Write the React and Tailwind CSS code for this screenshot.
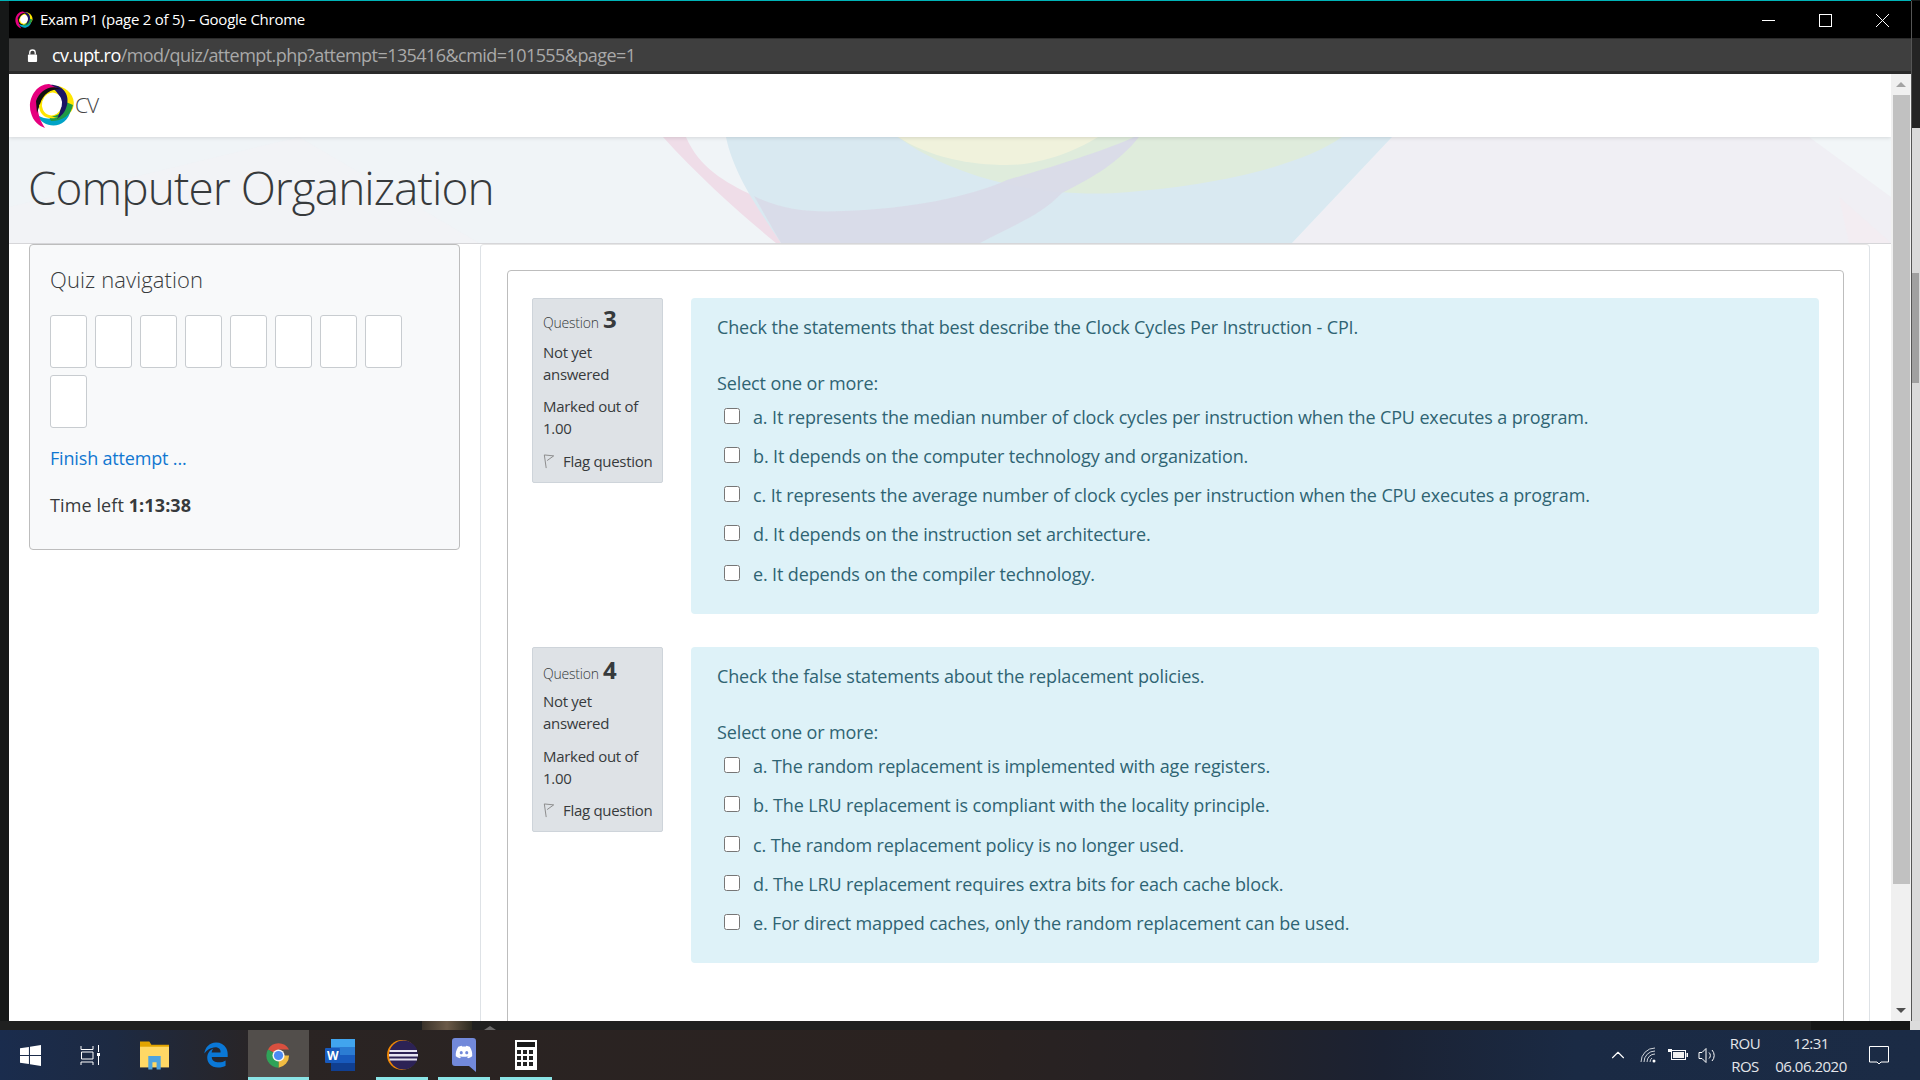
// Moodle quiz attempt in a Chrome app window, over the Windows 10 taskbar.
import { ChevronUp } from 'lucide-react';
import { FaDiscord, FaEdgeLegacy } from 'react-icons/fa';

const QUESTIONS = [
  {
    n: 3,
    text: 'Check the statements that best describe the Clock Cycles Per Instruction - CPI.',
    options: [
      'a. It represents the median number of clock cycles per instruction when the CPU executes a program.',
      'b. It depends on the computer technology and organization.',
      'c. It represents the average number of clock cycles per instruction when the CPU executes a program.',
      'd. It depends on the instruction set architecture.',
      'e. It depends on the compiler technology.',
    ],
  },
  {
    n: 4,
    text: 'Check the false statements about the replacement policies.',
    options: [
      'a. The random replacement is implemented with age registers.',
      'b. The LRU replacement is compliant with the locality principle.',
      'c. The random replacement policy is no longer used.',
      'd. The LRU replacement requires extra bits for each cache block.',
      'e. For direct mapped caches, only the random replacement can be used.',
    ],
  },
];

// Ring logo of the site, also used as the favicon.
function Logo({ className }) {
  return (
    <svg viewBox="0 0 46 46" className={className}>
      <ellipse cx="27" cy="19" rx="18" ry="16" fill="#ffe600" transform="rotate(20 27 19)" />
      <path d="M8 32 C14 46 38 48 42 26 C36 34 22 40 8 32Z" fill="#00a3c7" />
      <path d="M22 38 C34 38 42 32 44 22 L37 19 C36 28 30 33 20 34Z" fill="#1f9a45" />
      <path d="M18 2 C32 0 41 10 38 22 C36 30 32 33 28 36 C32 28 34 18 29 11 C26 6 22 4 18 2Z" fill="#1b1464" />
      <path d="M20 1 C6 1 -2 18 2 30 C4 38 10 43 16 45 C10 36 7 26 10 17 C14 8 22 5 28 5Z" fill="#e6007e" />
      <path d="M7 18 C11 7 22 1 31 6 C22 6 14 11 11 21 L8 30Z" fill="#111" />
      <path d="M10 22 C10 32 18 38 30 34 C22 36 14 30 16 18Z" fill="#ffe600" />
      <ellipse cx="23" cy="21" rx="10" ry="11.5" fill="#fff" transform="rotate(15 23 21)" />
    </svg>
  );
}

function HeroArt() {
  return (
    <svg viewBox="0 0 1882 106" preserveAspectRatio="none" className="absolute inset-0 w-full h-full">
      <path d="M290 0 L470 106 L0 106 L0 70Z" fill="#f3f2f5" opacity="0.5" />
      <path d="M1383 0 L1882 0 L1882 106 L1283 106Z" fill="#f0eff4" />
      <path d="M654 0 L677 0 C690 30 715 45 745 59 L772 106 L767 106 C735 80 690 40 654 0Z" fill="#efdde8" />
      <path d="M717 0 L1383 0 L1283 106 L772 106 C755 80 725 40 717 0Z" fill="#d9e9f1" />
      <path d="M889 0 C950 45 1040 60 1107 56 C1200 50 1290 30 1333 0Z" fill="#dfecdc" />
      <path d="M889 0 C920 20 960 28 998 28 C1030 28 1065 15 1089 0Z" fill="#f0f2dc" />
      <path d="M745 59 C770 72 800 76 835 74 C900 72 960 60 998 43 C1050 28 1100 12 1125 0 L1130 0 C1110 25 1085 40 1053 56 C1030 80 1000 90 971 106 L772 106Z" fill="#d9dbe8" opacity="0.95" />
      <path d="M1800 0 L1882 60 L1882 0Z" fill="#f2f6f8" />
      <path d="M1830 60 L1882 106 L1840 106Z" fill="#f3edf2" />
    </svg>
  );
}

function FlagIcon() {
  return (
    <svg viewBox="0 0 12 16" className="w-[12px] h-[15px] shrink-0">
      <path d="M3 15 L1 1 L11 2 L4 7" fill="none" stroke="#888" strokeWidth="1" />
    </svg>
  );
}

function Question({ q }) {
  const second = q.n === 4;
  return (
    <div className="flex gap-[28px] h-[349px]">
      <div className="w-[131px] h-[184.5px] bg-[#dee2e6] border border-[#ced4da] rounded-[2px] px-[10px] text-[#373a3c] text-[15px] tracking-[-0.3px] shrink-0">
        <div className={`flex items-baseline h-[36px] gap-[4px] ${second ? 'pt-[8px]' : 'pt-[6px]'}`}>
          <span className="text-[14px] font-light tracking-[-0.2px]">Question</span>
          <span className="text-[24px] font-bold leading-[28px]">{q.n}</span>
        </div>
        <p className="leading-[22px] mt-[6px]">Not yet answered</p>
        <p className={`leading-[22px] ${second ? 'mt-[11px]' : 'mt-[10px]'}`}>Marked out of 1.00</p>
        <div className={`flex items-center gap-[8px] whitespace-nowrap ${second ? 'mt-[10px]' : 'mt-[11px]'}`}>
          <FlagIcon />
          <span>Flag question</span>
        </div>
      </div>

      <div className="w-[1128px] h-[316px] bg-[#def2f8] rounded-[4px] pl-[26px] pt-[17px] text-[#2f6473] text-[18px] tracking-[-0.13px]">
        <p className="leading-[24px] h-[24px]">{q.text}</p>
        <p className="leading-[24px] h-[24px] mt-[32px]">Select one or more:</p>
        <div className={second ? 'mt-[3px]' : 'mt-[2.4px]'}>
          {q.options.map((opt) => (
            <label key={opt} className="flex items-center h-[39.25px]">
              <input type="checkbox" className="w-4 h-4 ml-[7px] mr-[13px] -mt-[3px] shrink-0" />
              <span>{opt}</span>
            </label>
          ))}
        </div>
      </div>
    </div>
  );
}

function Scrollbar() {
  return (
    <div className="w-[20px] shrink-0 bg-[#f0f0f0] flex flex-col items-end relative">
      <div className="h-[21px] w-full flex items-center justify-center">
        <div className="w-0 h-0 border-x-[5px] border-x-transparent border-b-[5px] border-b-[#a3a3a3]" />
      </div>
      <div className="w-[17px] h-[789px] mr-px bg-[#c1c1c1]" />
      <div className="flex-1 w-full flex items-end justify-center pb-[8px]">
        <div className="w-0 h-0 border-x-[5px] border-x-transparent border-t-[5px] border-t-[#505050]" />
      </div>
    </div>
  );
}

function Browser() {
  return (
    <div className="w-[1902px] h-[1020px] flex flex-col">
      {/* Title bar */}
      <div className="h-[37px] bg-black flex items-center text-white text-[15px] shrink-0">
        <Logo className="w-[18px] h-[18px] ml-[6px] mr-[7px]" />
        <span className="tracking-[-0.25px]">Exam P1 (page 2 of 5) – Google Chrome</span>
        <svg width="150" height="37" viewBox="0 0 150 37" className="ml-auto mr-[4px]" fill="none" stroke="#fff" strokeWidth="1">
          <path d="M5 19.5 H18" />
          <rect x="62.5" y="13.5" width="12" height="12" />
          <path d="M119 13 L132 26 M132 13 L119 26" />
        </svg>
      </div>

      {/* Address bar */}
      <div className="h-[36px] bg-[#3f3f3f] border-t border-t-[#2b2b2b] border-b-[3px] border-b-[#2a2a2a] flex items-center text-[18px] tracking-[-0.56px] shrink-0">
        <svg viewBox="0 0 12 14" className="w-[11px] h-[13px] ml-[18px] mr-[14px]">
          <path d="M3 6 V4 a3 3 0 0 1 6 0 V6" fill="none" stroke="#fff" strokeWidth="1.4" />
          <rect x="1" y="6" width="10" height="8" rx="1" fill="#fff" />
        </svg>
        <span className="text-white">cv.upt.ro</span>
        <span className="text-[#a9a9a9]">/mod/quiz/attempt.php?attempt=135416&amp;cmid=101555&amp;page=1</span>
      </div>

      {/* Page */}
      <div className="flex flex-1 min-h-0 bg-white">
        <div className="flex-1 min-w-0 flex flex-col overflow-hidden">
          <header className="h-[63px] flex items-center pl-[20px] bg-white relative z-10 shadow-[0_1px_4px_rgba(0,0,0,0.12)] shrink-0">
            <Logo className="w-[46px] h-[46px]" />
            <span className="text-[21px] font-light text-[#444] tracking-[-1px]">CV</span>
          </header>

          <div className="h-[107px] relative bg-[#f0f4f7] border-b border-b-[#d6d6d9] shrink-0 overflow-hidden">
            <HeroArt />
            <h1 className="relative pl-[19px] pt-[19px] text-[46px] leading-[62px] font-light text-[#373a3c] tracking-[-0.95px]">
              Computer Organization
            </h1>
          </div>

          <div className="flex flex-1 min-h-0 pl-[20px]">
            <aside className="w-[431px] h-[306px] mr-[20px] bg-[#f8f9fa] border border-[#bdbdbd] rounded-[4px] pl-[20px] text-[#373a3c] shrink-0">
              <h2 className="text-[22px] font-light leading-[28px] mt-[20px] tracking-[0.1px]">Quiz navigation</h2>
              <div className="flex flex-wrap gap-x-[8px] gap-y-[7px] w-[370px] mt-[22px]">
                {Array.from({ length: 9 }).map((_, i) => (
                  <div key={i} className="w-[37px] h-[53px] bg-white border border-[#c8ccd0] rounded-[3px]" />
                ))}
              </div>
              <p className="text-[18px] leading-[24px] mt-[18px] text-[#1177d1] tracking-[-0.17px]">Finish attempt ...</p>
              <p className="text-[18px] leading-[24px] mt-[23px] tracking-[0.1px]">
                Time left <b className="font-bold">1:13:38</b>
              </p>
            </aside>

            <main className="w-[1390px] border-x border-x-[#dee2e6] rounded-t-[4px] border-t border-t-[#e6e6e6] pt-[25px] pl-[26px] pr-[25px] overflow-hidden shrink-0">
              <div className="h-[900px] border border-[#bdbdbd] rounded-t-[4px] pt-[27px] px-[24px]">
                {QUESTIONS.map((q) => (
                  <Question key={q.n} q={q} />
                ))}
              </div>
            </main>
          </div>
        </div>
        <Scrollbar />
      </div>
    </div>
  );
}

function TaskButton({ active, running, children }) {
  return (
    <div className={`relative h-full flex items-center justify-center shrink-0 ${active ? 'w-[61px] ml-px bg-[#524e4b]' : 'w-[62px]'}`}>
      {children}
      {(active || running) && <div className={`absolute bottom-0 h-[3px] bg-[#8be4e6] ${active ? 'inset-x-0' : 'left-[5px] right-[5px]'}`} />}
    </div>
  );
}

function Taskbar() {
  return (
    <div className="h-[50px] flex items-center text-[#e4e6ea] text-[15px] tracking-[-0.5px] bg-[linear-gradient(90deg,#1a2c4d_0%,#1d2a42_6%,#2a2423_14%,#2a2220_50%,#252225_62%,#1b2233_72%,#1a2a44_82%,#1b2b45_100%)]">
      <div className="w-[60px] flex justify-center">
        <svg viewBox="0 0 20 20" className="w-[21px] h-[21px]" fill="#fff">
          <path d="M0 3 L8.5 1.8 V9.5 H0Z M9.5 1.6 L20 0 V9.5 H9.5Z M0 10.5 H8.5 V18.2 L0 17Z M9.5 10.5 H20 V20 L9.5 18.4Z" />
        </svg>
      </div>
      <div className="w-[63px] pr-[3px] flex justify-center">
        <svg viewBox="0 0 20 20" className="w-[20px] h-[20px]" fill="none" stroke="#fff" strokeWidth="1">
          <path d="M1 4.5 V1 M1 4.5 H13 V1 M1.5 7 H13 V14 H1.5Z M1 20 V17 H13 V20 M18.5 0 V7 M18.5 11 V20" />
          <rect x="17" y="8" width="3" height="3" fill="#fff" stroke="none" />
        </svg>
      </div>
      <TaskButton>
        <svg viewBox="0 0 28 28" className="w-[29px] h-[30px]">
          <path d="M0 1 H9 L11 4 H28 V24 H0Z" fill="#e2a400" />
          <path d="M0 6 H28 V26 H0Z" fill="#ffd865" />
          <path d="M8 15 H20 V28 H16 V21 H12 V28 H8Z" fill="#4da3e0" />
        </svg>
      </TaskButton>
      <TaskButton>
        <FaEdgeLegacy className="w-[26px] h-[30px] text-[#0a78d7]" />
      </TaskButton>
      <TaskButton active>
        <svg viewBox="0 0 48 48" className="w-[29px] h-[29px]">
          <path d="M24 24 L6.5 14 A20.2 20.2 0 0 1 41.5 14 H24Z" fill="#d9503f" />
          <path d="M24 24 H41.5 A20.2 20.2 0 0 1 24 44.2Z" fill="#f0bc42" />
          <path d="M24 24 L24 44.2 A20.2 20.2 0 0 1 6.5 14Z" fill="#2fa358" />
          <circle cx="24" cy="24" r="10" fill="#f5f5f5" />
          <circle cx="24" cy="24" r="7.6" fill="#4a8af4" />
        </svg>
      </TaskButton>
      <TaskButton>
        <svg viewBox="0 0 30 32" className="w-[30px] h-[32px]">
          <rect x="6" y="0" width="24" height="32" rx="1" fill="#2b7cd3" />
          <rect x="6" y="0" width="24" height="8" fill="#41a5ee" />
          <rect x="6" y="16" width="24" height="8" fill="#185abd" />
          <rect x="6" y="24" width="24" height="8" fill="#103f91" />
          <rect x="0" y="9" width="15" height="15" rx="1" fill="#185abd" />
          <text x="7.5" y="20.5" textAnchor="middle" fontSize="12" fontWeight="700" fill="#fff">W</text>
        </svg>
      </TaskButton>
      <TaskButton running>
        <svg viewBox="0 0 32 32" className="w-[32px] h-[32px]">
          <circle cx="16" cy="16" r="15" fill="#f08705" />
          <circle cx="17.5" cy="16" r="14.5" fill="#2c2255" />
          <path d="M3.5 11 H31 V13 H3.5Z M3 15 H32 V17.5 H3Z M3.5 19.5 H31 V21.5 H3.5Z" fill="#e8e6f2" />
        </svg>
      </TaskButton>
      <TaskButton running>
        <div className="relative w-[24px] h-[34px]">
          <svg viewBox="0 0 24 34" className="absolute inset-0 w-full h-full">
            <path d="M3 0 H21 a3 3 0 0 1 3 3 V34 L17 28 H3 a3 3 0 0 1-3-3 V3 a3 3 0 0 1 3-3Z" fill="#7289da" />
          </svg>
          <FaDiscord className="absolute left-[3px] top-[6px] w-[18px] h-[16px] text-white" />
        </div>
      </TaskButton>
      <TaskButton running>
        <svg viewBox="0 0 22 30" className="w-[22px] h-[30px]">
          <rect width="22" height="30" fill="#fff" />
          <rect x="2" y="2" width="18" height="5" fill="#1a1a1a" />
          {[10, 16, 22].map((y) => [2, 8, 14].map((x) => (
            <rect key={`${x}-${y}`} x={x} y={y} width="4" height="4" fill="#222" />
          )))}
        </svg>
      </TaskButton>

      {/* Tray */}
      <ChevronUp className="ml-auto w-[22px] h-[22px] text-white" strokeWidth={1.2} />
      <svg viewBox="0 0 16 16" className="w-[16px] h-[16px] ml-[11px]" fill="none" stroke="#cfd3d9" strokeWidth="1">
        <path d="M1 15 A14 14 0 0 1 15 1 M4 15 A11 11 0 0 1 15 4 M7 15 A8 8 0 0 1 15 7 M10 15 A5 5 0 0 1 12 11" />
        <circle cx="14" cy="14" r="1.5" fill="#fff" stroke="none" />
      </svg>
      <svg viewBox="0 0 20 12" className="w-[20px] h-[12px] ml-[12px]">
        <rect x="3.5" y="1.5" width="14" height="9" fill="none" stroke="#fff" />
        <rect x="5" y="3" width="11" height="6" fill="#f1f1f1" />
        <rect x="18.5" y="4" width="1.5" height="4" fill="#fff" />
        <path d="M0 0 H4 V3 H0Z" fill="#fff" />
      </svg>
      <svg viewBox="0 0 20 16" className="w-[20px] h-[17px] ml-[10px]" fill="none" stroke="#fff" strokeWidth="1">
        <path d="M1 5 H4 L8 1 V15 L4 11 H1Z M11 5 A4 4 0 0 1 11 11 M14 2.5 A8 8 0 0 1 14 13.5" />
      </svg>
      <div className="w-[50px] ml-[2px] flex flex-col items-center leading-[23px]">
        <span>ROU</span>
        <span>ROS</span>
      </div>
      <div className="w-[82px] flex flex-col items-center leading-[23px]">
        <span>12:31</span>
        <span>06.06.2020</span>
      </div>
      <svg viewBox="0 0 20 19" className="w-[20px] h-[19px] ml-[17px] mr-[31px]" fill="none" stroke="#fff" strokeWidth="1">
        <path d="M0.5 0.5 H19.5 V16 H12 L10 18 L8 16 H0.5Z" />
      </svg>
    </div>
  );
}

export default function App() {
  return (
    <div className="w-[1920px] h-[1080px] overflow-hidden flex flex-col bg-[#1a1c1c] font-['Open_Sans',sans-serif]">
      <div className="h-px w-[1911px] bg-[#00b3b8] shrink-0" />
      <div className="flex h-[1020px] shrink-0">
        <div className="w-[9px] bg-[#161818]" />
        <Browser />
        <div className="w-[9px] flex flex-col bg-[#d9d9d9] border-l border-l-[#555]">
          <div className="h-[37px] bg-black" />
          <div className="h-[90px] bg-[#242424]" />
          <div className="h-[145px]" />
          <div className="h-[110px] w-[7px] bg-[#a0a0a0]" />
        </div>
      </div>
      {/* Strip of the window behind, between the browser and the taskbar */}
      <div className="h-[9px] flex items-end shrink-0 bg-[#1f2020]">
        <div className="w-[422px]" />
        <div className="w-[50px] h-full bg-[linear-gradient(90deg,#3a332a,#6b5a48,#2b2a20)]" />
        <div className="ml-[12px] mr-[1315px] w-0 h-0 border-x-[6px] border-x-transparent border-b-[4px] border-b-[#6a6a6a]" />
        <div className="w-[99px] h-full bg-[#151616]" />
        <div className="flex-1 h-full bg-[#dcdcdc]" />
      </div>
      <Taskbar />
    </div>
  );
}
